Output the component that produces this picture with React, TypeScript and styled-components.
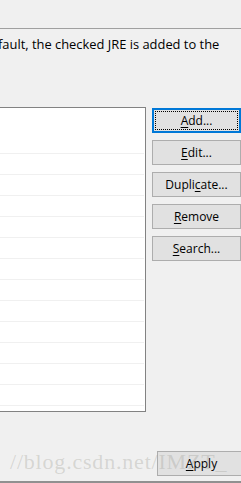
import React from 'react';
import styled, { createGlobalStyle } from 'styled-components';

const GlobalStyle = createGlobalStyle`
  html, body {
    margin: 0;
    padding: 0;
    background: #f0f0f0;
  }
  body {
    font-family: 'Open Sans', 'Noto Sans', sans-serif;
    font-size: 12px;
    color: #000;
  }
`;

const Page = styled.div`
  position: relative;
  width: 241px;
  height: 483px;
  overflow: hidden;
  background: #f0f0f0;
  display: flex;
  flex-direction: column;
`;

const TopRule = styled.div`
  margin-top: 28px;
  height: 1px;
  flex-shrink: 0;
  background: #a0a0a0;
`;

const Description = styled.div`
  margin: 6px 0 0 -2px;
  height: 18px;
  line-height: 18px;
  font-size: 12.9px;
  white-space: nowrap;
  flex-shrink: 0;
`;

const Main = styled.div`
  margin-top: 54px;
  display: flex;
  align-items: flex-start;
  gap: 6px;
  flex-shrink: 0;
`;

const Table = styled.div`
  margin-left: -20px;
  width: 166px;
  height: 305px;
  box-sizing: border-box;
  background: #fff;
  border: 1px solid #828282;
  display: flex;
  flex-direction: column;
  padding-top: 45px;
  overflow: hidden;
`;

const Row = styled.div`
  height: 20px;
  flex-shrink: 0;
  border-top: 1px solid #f0f0f0;
  margin-right: 1px;
`;

const ButtonColumn = styled.div`
  display: flex;
  flex-direction: column;
  gap: 7px;
  margin-top: 1px;
`;

const Button = styled.div<{ $default?: boolean }>`
  width: 89px;
  height: 25px;
  box-sizing: border-box;
  background: #e1e1e1;
  border: ${(p) => (p.$default ? '2px solid #0078d7' : '1px solid #adadad')};
  display: flex;
  align-items: center;
  justify-content: center;
  position: relative;
  padding-bottom: 1px;

  ${(p) =>
    p.$default &&
    `
    &::after {
      content: '';
      position: absolute;
      inset: 1px;
      border: 1px dotted #000;
    }
  `}

  u {
    text-decoration-thickness: 1px;
    text-underline-offset: 2px;
  }
`;

const Footer = styled.div`
  flex: 1;
  display: flex;
  justify-content: flex-end;
  align-items: flex-start;
  padding-top: 39px;
  margin-right: -5px;
`;

const BottomRule = styled.div`
  height: 2px;
  flex-shrink: 0;
  background: #909090;
`;

const Watermark = styled.div`
  position: absolute;
  left: 10px;
  top: 449px;
  font-family: 'Liberation Serif', serif;
  font-size: 22px;
  color: rgba(150, 150, 140, 0.3);
  white-space: nowrap;
  letter-spacing: 0.8px;
  pointer-events: none;
`;

const rowCount = 13;

export default function App() {
  return (
    <Page>
      <GlobalStyle />
      <TopRule />
      <Description>fault, the checked JRE is added to the</Description>
      <Main>
        <Table>
          {Array.from({ length: rowCount }).map((_, i) => (
            <Row key={i} />
          ))}
        </Table>
        <ButtonColumn>
          <Button $default>
            <span>
              <u>A</u>dd...
            </span>
          </Button>
          <Button>
            <span>
              <u>E</u>dit...
            </span>
          </Button>
          <Button>
            <span>
              Dupli<u>c</u>ate...
            </span>
          </Button>
          <Button>
            <span>
              <u>R</u>emove
            </span>
          </Button>
          <Button>
            <span>
              <u>S</u>earch...
            </span>
          </Button>
        </ButtonColumn>
      </Main>
      <Footer>
        <Button>
          <span>
            <u>A</u>pply
          </span>
        </Button>
      </Footer>
      <BottomRule />
      <Watermark>//blog.csdn.net/IMZT_</Watermark>
    </Page>
  );
}
